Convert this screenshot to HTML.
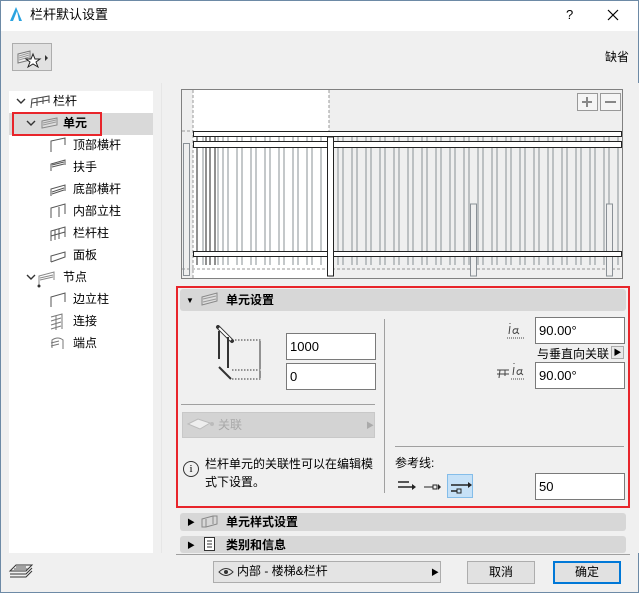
<!DOCTYPE html><html><head><meta charset="utf-8"><style>
*{box-sizing:border-box;margin:0;padding:0}
body{width:639px;height:593px;overflow:hidden;background:#f0f0f0;font-family:"Liberation Sans","Noto Sans CJK SC",sans-serif;font-size:12px;color:#000;position:relative}
.a{position:absolute}
.t{position:absolute;white-space:nowrap;line-height:14px}
.in{position:absolute;background:#fff;border:1px solid #7a7a7a;font-size:13px;padding:5px 0 0 3px}
.sec{position:absolute;background:#d7d7d7;border-radius:3px;font-weight:bold;font-size:12px}
</style></head><body>
<div class="a" style="left:0;top:0;width:639px;height:593px;border:1px solid #6d8aa6"></div>
<div class="a" style="left:1px;top:1px;width:637px;height:30px;background:#fff"></div>
<svg class="a" style="left:9px;top:6px" width="14" height="16"><path d="M1 15 L7 1 L13 15 Z" fill="#2aa3e0"/><path d="M4 15 L8 5 L10 15Z" fill="#fff"/></svg>
<div class="t" style="left:30px;top:8px;font-size:13px">栏杆默认设置</div>
<div class="t" style="left:566px;top:8px;font-size:13px">?</div>
<svg class="a" style="left:607px;top:9px" width="12" height="12"><path d="M1 1L11 11M11 1L1 11" stroke="#000" stroke-width="1.2"/></svg>
<div class="a" style="left:12px;top:43px;width:40px;height:28px;border:1px solid #adadad;background:#e1e1e1"></div>
<svg class="a" style="left:16px;top:48px" width="34" height="20"><path d="M2 6 L14 3 L14 12 L2 15Z" fill="#eee" stroke="#777"/><path d="M3 8 L13 5 M3 10 L13 7 M3 12L13 9" stroke="#999"/><path d="M17 6 L19 11 L24 11 L20 14 L22 19 L17 16 L12 19 L14 14 L10 11 L15 11Z" fill="#fff" stroke="#222"/><path d="M29 7 L32 10 L29 13Z" fill="#333"/></svg>
<div class="t" style="left:605px;top:50px">缺省</div>
<div class="a" style="left:161px;top:83px;width:478px;height:470px;background:#f0f0f0;border-left:1px solid #e6e6e6"></div>
<div class="a" style="left:9px;top:91px;width:144px;height:462px;background:#fff"></div>
<div class="a" style="left:9px;top:113px;width:144px;height:22px;background:#d9d9d9"></div>
<div class="a" style="left:12px;top:112px;width:90px;height:24px;border:2px solid #e8252b"></div>
<svg class="a" style="left:15px;top:95px" width="30" height="190" fill="none" stroke="#333" stroke-width="1.4"><path d="M2 4L6 8L10 4"/><path d="M12 26L16 30L20 26"/><path d="M12 180L16 184L20 180"/></svg>
<svg class="a" style="left:30px;top:95px" width="22" height="14"><path d="M1 13 L2 4 L19 1 L19 8 M7 3 L7 11 M13 2 L13 9 M2 8 L19 5" stroke="#444" fill="none"/></svg>
<svg class="a" style="left:40px;top:116px" width="20" height="14"><path d="M2 5 L17 2 L17 9 L2 12Z" fill="#ddd" stroke="#888"/><path d="M3 7L16 4M3 9L16 6" stroke="#999"/></svg>
<div class="t" style="left:53px;top:94px">栏杆</div>
<div class="t" style="left:63px;top:116px;font-weight:bold">单元</div>
<svg class="a" style="left:49px;top:137px" width="20" height="220" fill="none" stroke="#555">
<path d="M2 15 L2 4 L16 1 L16 8"/>
<path d="M2 34 L2 27 L16 23 L16 28 M3 28L15 25 M3 30L15 27"/>
<path d="M2 59 L2 52 L16 48 L16 54 M3 57 L15 53 M3 55 L15 51"/>
<path d="M2 81 L2 71 L16 67 L16 77 M10 70 L10 80"/>
<path d="M2 104 L2 94 L16 90 L16 100 M6 93 L6 103 M10 92 L10 102 M2 99 L16 95"/>
<path d="M2 125 L2 119 L16 115 L16 120 L2 125"/>
<path d="M2 170 L2 160 L16 156 L16 165"/>
<path d="M2 180 L13 177 L13 192 M2 184 L12 181 M2 188 L12 185 M2 192 L12 189 M7 179 L7 193" stroke="#777"/>
<path d="M3 211 L3 203 Q9 199 14 203 L14 212 M2 206 L10 204 M2 209 L10 207" stroke="#777"/>
</svg>
<svg class="a" style="left:36px;top:269px" width="22" height="20" fill="none"><path d="M3 17 L3 7 L18 3 L18 11 M4 9 L17 6 M4 11 L17 8" stroke="#888"/><circle cx="3" cy="17" r="1.5" fill="#333"/></svg>
<div class="t" style="left:73px;top:138px">顶部横杆</div>
<div class="t" style="left:73px;top:160px">扶手</div>
<div class="t" style="left:73px;top:182px">底部横杆</div>
<div class="t" style="left:73px;top:204px">内部立柱</div>
<div class="t" style="left:73px;top:226px">栏杆柱</div>
<div class="t" style="left:73px;top:248px">面板</div>
<div class="t" style="left:63px;top:270px">节点</div>
<div class="t" style="left:73px;top:292px">边立柱</div>
<div class="t" style="left:73px;top:314px">连接</div>
<div class="t" style="left:73px;top:336px">端点</div>
<svg class="a" style="left:181px;top:89px" width="442" height="190">
<rect x="0.5" y="0.5" width="441" height="189" fill="#efefef" stroke="#808080"/>
<rect x="12" y="1" width="136" height="188" fill="#fff"/>
<path d="M12 1V189M148 1V48M1 42H12M1 180H441" stroke="#999" stroke-dasharray="3 2"/>
<rect x="396.5" y="4.5" width="20" height="17" fill="#f5f5f5" stroke="#999"/><path d="M406 8V18M401 13H411" stroke="#888" stroke-width="2"/>
<rect x="419.5" y="4.5" width="20" height="17" fill="#f5f5f5" stroke="#999"/><path d="M424 13H435" stroke="#888" stroke-width="2"/>
<g stroke="#8a9096" fill="none">
<path d="M22 48V176M37 48V176M42 48V176M47 48V176M56 48V176M61 48V176M70 48V176M75 48V176M84 48V176M89 48V176M98 48V176M103 48V176M112 48V176M117 48V176M126 48V176M131 48V176M140 48V176"/>
<path d="M157 48V176M162 48V176M171 48V176M176 48V176M185 48V176M190 48V176M199 48V176M204 48V176M213 48V176M218 48V176M227 48V176M232 48V176M241 48V176M246 48V176M255 48V176M260 48V176M269 48V176M274 48V176M283 48V176M288 48V176M297 48V176M302 48V176M311 48V176M316 48V176M325 48V176M330 48V176M339 48V176M344 48V176M353 48V176M358 48V176M367 48V176M372 48V176M381 48V176M386 48V176M395 48V176M400 48V176M409 48V176M414 48V176M423 48V176M428 48V176M437 48V176"/>
<rect x="2.5" y="54.5" width="6" height="132"/>
<rect x="289.5" y="115" width="6" height="72" fill="#efefef"/>
<rect x="425.5" y="115" width="6" height="72" fill="#efefef"/>
</g>
<g stroke="#222" fill="none">
<path d="M16 48V176M25 48V176M29 48V176M34 48V176"/>
<rect x="12.5" y="42.5" width="428" height="5" fill="#fff"/>
<rect x="12.5" y="52.5" width="428" height="6" fill="#fff"/>
<rect x="12.5" y="162.5" width="428" height="5" fill="#fff"/>
<rect x="146.5" y="48" width="6" height="139" fill="#fff"/>
</g>
</svg>
<div class="a" style="left:176px;top:286px;width:454px;height:222px;border:2px solid #e8252b"></div>
<div class="sec" style="left:180px;top:289px;width:446px;height:22px"></div>
<div class="t" style="left:186px;top:294px;font-size:8px">▼</div>
<svg class="a" style="left:201px;top:292px" width="18" height="14"><path d="M1 5 L16 1 L16 9 L1 13Z" fill="#ddd" stroke="#888"/><path d="M2 7L15 4M2 10L15 7" stroke="#999"/></svg>
<div class="t" style="left:226px;top:293px;font-weight:bold">单元设置</div>
<svg class="a" style="left:214px;top:325px" width="50" height="60" fill="none"><path d="M4 2 L18 16" stroke="#333" stroke-width="4" stroke-linecap="round"/><path d="M5 3 L17 15" stroke="#fff" stroke-width="2"/><path d="M5 6V34M14 12V43M5 42L17 54" stroke="#333" stroke-width="2"/><path d="M18 15H48M18 45H48M18 54H48" stroke="#333" stroke-dasharray="1.5 1.5"/><path d="M46 16V44M46 46V53" stroke="#333"/></svg>
<div class="in" style="left:286px;top:333px;width:90px;height:27px">1000</div>
<div class="in" style="left:286px;top:363px;width:90px;height:27px">0</div>
<div class="a" style="left:384px;top:319px;width:1px;height:174px;background:#a0a0a0"></div>
<div class="a" style="left:181px;top:404px;width:194px;height:1px;background:#a0a0a0"></div>
<div class="a" style="left:182px;top:412px;width:193px;height:26px;background:#d3d3d3;border:1px solid #c8c8c8"></div>
<svg class="a" style="left:186px;top:417px" width="30" height="14"><path d="M2 7 L12 2 L24 6 L14 12Z" fill="#eee" stroke="#bbb"/><circle cx="26" cy="7" r="2" fill="#bbb"/></svg>
<div class="t" style="left:218px;top:418px;color:#a8a8a8">关联</div>
<div class="t" style="left:366px;top:419px;font-size:8px;color:#aaa">▶</div>
<div class="a" style="left:183px;top:461px;width:16px;height:16px;border:1px solid #333;border-radius:50%;font-size:11px;text-align:center;line-height:14px;font-family:'Liberation Serif',serif">i</div>
<div class="t" style="left:205px;top:455px;line-height:18px">栏杆单元的关联性可以在编辑模<br>式下设置。</div>
<svg class="a" style="left:495px;top:320px" width="30" height="74" fill="none" stroke="#444"><path d="M15 6 L14 14 M15 3V4"/><path d="M22 9 Q18 8 18 12 Q19 15 22 12 L24 14 M22 12 L23 8"/><path d="M12 18H30" stroke-dasharray="1 1"/><path d="M2 50H14M5 50L4 58M10 50V56M2 54H14"/><path d="M19 47 L18 55 M19 43V44"/><path d="M26 50 Q22 49 22 53 Q23 56 26 53 L28 55 M26 53 L27 49"/><path d="M16 59H30" stroke-dasharray="1 1"/></svg>
<div class="in" style="left:535px;top:317px;width:90px;height:27px">90.00°</div>
<div class="t" style="left:537px;top:347px">与垂直向关联</div>
<div class="a" style="left:611px;top:346px;width:13px;height:13px;border:1px solid #aaa;background:#e8e8e8;font-size:8px;text-align:center;line-height:12px">▶</div>
<div class="in" style="left:535px;top:362px;width:90px;height:27px">90.00°</div>
<div class="a" style="left:395px;top:446px;width:229px;height:1px;background:#a0a0a0"></div>
<div class="t" style="left:395px;top:456px">参考线:</div>
<svg class="a" style="left:397px;top:474px" width="80" height="24"><path d="M1 8H12M1 13H16" stroke="#222" stroke-width="1.5"/><path d="M15 10 L19 13 L15 16Z" fill="#222"/><path d="M27 13H36" stroke="#222"/><rect x="36" y="11" width="4" height="4" fill="none" stroke="#222"/><path d="M41 10 L44 13 L41 16Z" fill="#222"/><rect x="50.5" y="0.5" width="25" height="23" fill="#c6e1f7" stroke="#84bde9"/><path d="M54 11H73M54 17H60" stroke="#222" stroke-width="1.5"/><rect x="60" y="15" width="4" height="4" fill="none" stroke="#222"/><path d="M71 8 L75 11 L71 14Z" fill="#222"/></svg>
<div class="in" style="left:535px;top:473px;width:90px;height:27px">50</div>
<div class="sec" style="left:180px;top:513px;width:446px;height:18px"></div>
<div class="t" style="left:187px;top:516px;font-size:8px">▶</div>
<svg class="a" style="left:201px;top:514px" width="18" height="14"><path d="M1 5 L12 2 L16 2 L16 10 L5 13 L1 13Z M5 5V13 M12 2V10" fill="none" stroke="#888"/></svg>
<div class="t" style="left:226px;top:515px;font-weight:bold">单元样式设置</div>
<div class="sec" style="left:180px;top:536px;width:446px;height:17px"></div>
<div class="t" style="left:187px;top:539px;font-size:8px">▶</div>
<svg class="a" style="left:204px;top:537px" width="12" height="14"><rect x="0.5" y="0.5" width="10" height="13" fill="#fff" stroke="#333"/><path d="M3 4H8M3 7H8M3 10H8" stroke="#333"/></svg>
<div class="t" style="left:226px;top:538px;font-weight:bold">类别和信息</div>
<div class="a" style="left:176px;top:554px;width:454px;height:1px;background:#a0a0a0"></div>
<svg class="a" style="left:8px;top:562px" width="26" height="16"><path d="M2 9 L8 3 L24 3 L18 9Z M2 12 L18 12 L24 6 M2 15 L18 15 L24 9" fill="none" stroke="#333"/><path d="M8 5L18 5M6 7L20 7" stroke="#555"/></svg>
<div class="a" style="left:213px;top:561px;width:228px;height:22px;border:1px solid #adadad;background:#e4e4e4"></div>
<svg class="a" style="left:218px;top:566px" width="16" height="12"><path d="M1 6 Q8 -1 15 6 Q8 13 1 6Z" fill="none" stroke="#333"/><circle cx="8" cy="6" r="2" fill="#333"/></svg>
<div class="t" style="left:237px;top:564px">内部 - 楼梯&amp;栏杆</div>
<div class="t" style="left:431px;top:566px;font-size:8px">▶</div>
<div class="a" style="left:467px;top:561px;width:68px;height:23px;border:1px solid #adadad;background:#e1e1e1;text-align:center;line-height:21px">取消</div>
<div class="a" style="left:553px;top:561px;width:68px;height:23px;border:2px solid #0078d7;background:#e1e1e1;text-align:center;line-height:19px">确定</div>
</body></html>
